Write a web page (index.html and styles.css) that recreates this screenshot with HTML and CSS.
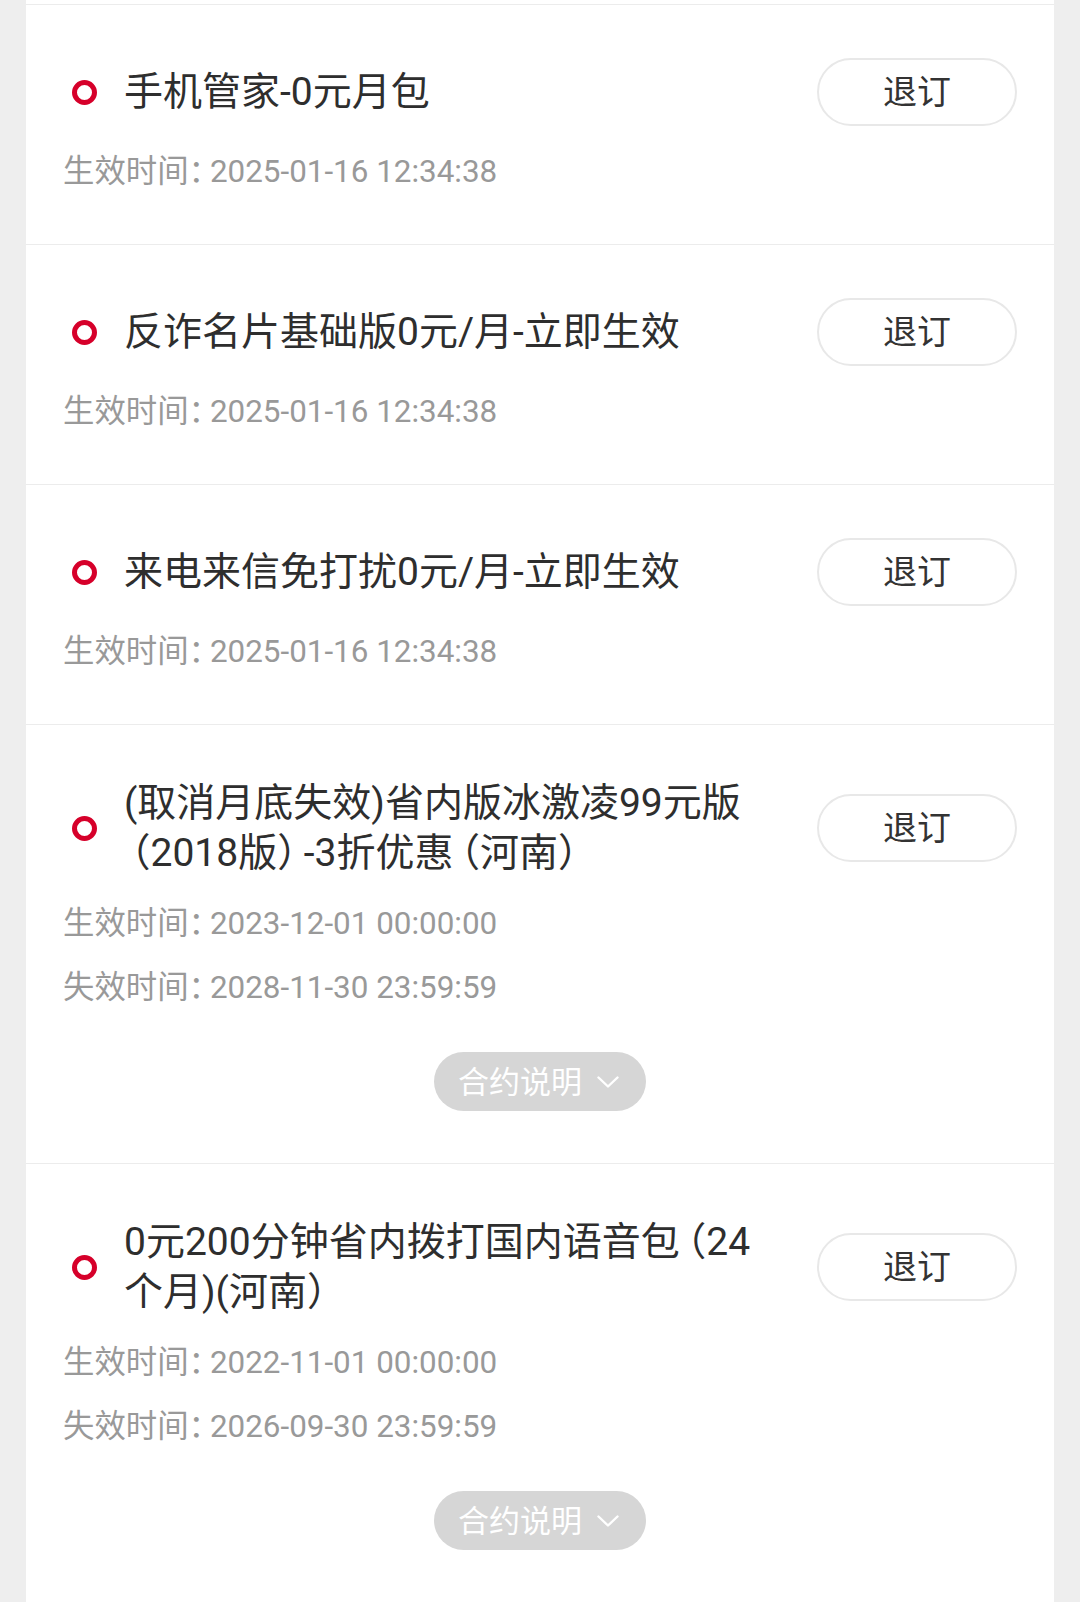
FILE: index.html
```html
<!DOCTYPE html>
<html lang="zh-CN">
<head>
<meta charset="utf-8">
<title>已订购业务</title>
<link rel="stylesheet" href="styles.css">
</head>
<body>
<div class="card">
  <div class="stub"></div>

  <div class="item">
    <div class="head">
      <span class="dot"></span>
      <div class="title">手机管家-0元月包</div>
      <button class="btn">退订</button>
    </div>
    <div class="meta">
      <div class="date">生效时间<span class="colon">：</span>2025-01-16 12:34:38</div>
    </div>
  </div>

  <div class="item">
    <div class="head">
      <span class="dot"></span>
      <div class="title">反诈名片基础版0元/月-立即生效</div>
      <button class="btn">退订</button>
    </div>
    <div class="meta">
      <div class="date">生效时间<span class="colon">：</span>2025-01-16 12:34:38</div>
    </div>
  </div>

  <div class="item">
    <div class="head">
      <span class="dot"></span>
      <div class="title">来电来信免打扰0元/月-立即生效</div>
      <button class="btn">退订</button>
    </div>
    <div class="meta">
      <div class="date">生效时间<span class="colon">：</span>2025-01-16 12:34:38</div>
    </div>
  </div>

  <div class="item">
    <div class="head">
      <span class="dot"></span>
      <div class="title">(取消月底失效)省内版冰激凌99元版<span class="op">（</span>2018版<span class="cp">）</span>-3折优惠<span class="op">（</span>河南<span class="cp">）</span></div>
      <button class="btn">退订</button>
    </div>
    <div class="meta">
      <div class="date">生效时间<span class="colon">：</span>2023-12-01 00:00:00</div>
      <div class="date">失效时间<span class="colon">：</span>2028-11-30 23:59:59</div>
    </div>
    <div class="more-wrap">
      <span class="more">合约说明<svg class="chev" width="22" height="12" viewBox="0 0 22 12"><polyline points="1.5,1.5 11,10.5 20.5,1.5" fill="none" stroke="#fff" stroke-width="2.4" stroke-linecap="round" stroke-linejoin="round"/></svg></span>
    </div>
  </div>

  <div class="item">
    <div class="head">
      <span class="dot"></span>
      <div class="title">0元200分钟省内拨打国内语音包<span class="op">（</span>24<wbr>个月)(河南<span class="cp">）</span></div>
      <button class="btn">退订</button>
    </div>
    <div class="meta">
      <div class="date">生效时间<span class="colon">：</span>2022-11-01 00:00:00</div>
      <div class="date">失效时间<span class="colon">：</span>2026-09-30 23:59:59</div>
    </div>
    <div class="more-wrap">
      <span class="more">合约说明<svg class="chev" width="22" height="12" viewBox="0 0 22 12"><polyline points="1.5,1.5 11,10.5 20.5,1.5" fill="none" stroke="#fff" stroke-width="2.4" stroke-linecap="round" stroke-linejoin="round"/></svg></span>
    </div>
  </div>
</div>
</body>
</html>
```

FILE: styles.css
```css
html, body {
  margin: 0;
  padding: 0;
  background: #eeeeee;
}

body {
  font-family: Roboto, "Noto Sans CJK SC", sans-serif;
  height: 1602px;
  overflow: hidden;
}

.card {
  margin: 0 26px;
  background: #ffffff;
  min-height: 1602px;
}

.stub {
  height: 4px;
}

.item {
  border-top: 1px solid #ececec;
  padding: 53px 37px 52px 37px;
}

.head {
  display: flex;
  align-items: center;
  min-height: 68px;
}

.dot {
  flex: none;
  box-sizing: border-box;
  width: 25px;
  height: 25px;
  border: 5px solid #d6002a;
  border-radius: 50%;
  margin-left: 9px;
  margin-right: 27px;
}

.title {
  flex: 1;
  margin-right: 38px;
  font-size: 39px;
  line-height: 50px;
  color: #2e2e2e;
  text-spacing-trim: space-all;
}

/* fullwidth punctuation: half-width glyph plus a little space, as in the source font */
.op,
.cp,
.colon {
  font-feature-settings: "halt" 1;
}

.op {
  padding-left: 0.18em;
}

.cp {
  padding-right: 0.18em;
}

.colon {
  padding-right: 0.18em;
}

.btn {
  flex: none;
  box-sizing: border-box;
  width: 200px;
  height: 68px;
  border: 2px solid #e8e8e8;
  border-radius: 34px;
  background: #ffffff;
  font-family: "Noto Sans CJK SC", sans-serif;
  font-size: 34px;
  color: #333333;
  padding: 0 0 4px 0;
  line-height: 1;
}

.meta {
  margin-top: 26px;
  display: flex;
  flex-direction: column;
  gap: 24px;
}

.date {
  font-size: 31.4px;
  line-height: 40px;
  color: #999999;
  text-spacing-trim: space-all;
  white-space: nowrap;
}

.more-wrap {
  margin-top: 44px;
  display: flex;
  justify-content: center;
}

.more {
  box-sizing: border-box;
  display: inline-flex;
  align-items: center;
  gap: 15px;
  height: 59px;
  padding: 0 27px 4px 24px;
  border-radius: 30px;
  background: #d6d6d6;
  color: #ffffff;
  font-family: "Noto Sans CJK SC", sans-serif;
  font-size: 31px;
}

.chev {
  display: block;
  margin-top: 4px;
}
```
